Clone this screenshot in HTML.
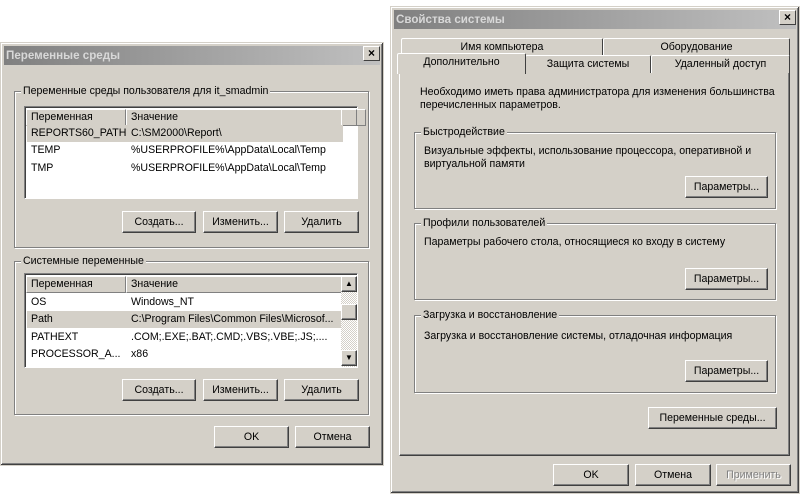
<!DOCTYPE html>
<html><head><meta charset="utf-8"><style>
*{box-sizing:border-box;margin:0;padding:0}
body{width:800px;height:498px;background:#fff;position:relative;overflow:hidden;font:10.6px "Liberation Sans","DejaVu Sans",sans-serif;color:#000}
.a{position:absolute}
.win{position:absolute;background:#d4d0c8;border:1px solid #d4d0c8;box-shadow:inset -1px -1px 0 #404040,inset 1px 1px 0 #fff,inset -2px -2px 0 #808080}
.title{position:absolute;left:3px;right:3px;top:3px;height:19px;background:linear-gradient(90deg,#808080,#c0c0c0);color:#d8d8d8;font-weight:bold;font-size:11.6px;line-height:19px;padding-left:2px}
.close{position:absolute;width:17px;height:15px;background:#d4d0c8;border:1px solid;border-color:#fff #404040 #404040 #fff;font:bold 12px/13px "Liberation Sans",sans-serif;text-align:center;color:#000}
.grp{position:absolute;border:1px solid #808080;box-shadow:1px 1px 0 #fff,inset 1px 1px 0 #fff}
.leg{position:absolute;top:-8px;left:6px;background:#d4d0c8;padding:0 2px;line-height:14px}
.btn{position:absolute;height:22px;background:#d4d0c8;border:1px solid;border-color:#fff #404040 #404040 #fff;box-shadow:inset -1px -1px 0 #808080;text-align:center;line-height:20px}
.list{position:absolute;background:#fff;border:1px solid;border-color:#808080 #fff #fff #808080;box-shadow:inset 1px 1px 0 #404040}
.hdr{position:absolute;top:2px;height:17px;background:#d4d0c8;border:1px solid;border-color:#fff #808080 #808080 #fff;line-height:15px;padding-left:4px}
.row{position:absolute;left:2px;height:17px;line-height:17px;white-space:nowrap}
.row span{position:absolute}
.tab{position:absolute;height:18px;background:#d4d0c8;border:1px solid;border-bottom:none;border-color:#fff #404040 #404040 #fff;text-align:center;line-height:16px;border-radius:2px 2px 0 0}
</style></head><body>

<div class="win" style="left:0;top:42px;width:384px;height:424px">
<div class="title">Переменные среды</div>
<div class="close" style="left:362px;top:3px">×</div>
</div>
<div class="grp" style="left:14px;top:91px;width:355px;height:157px"><div class="leg">Переменные среды пользователя для it_smadmin</div></div>
<div class="list" style="left:24px;top:106px;width:334px;height:93px">
<div class="hdr" style="left:1px;width:100px">Переменная</div>
<div class="hdr" style="left:101px;width:240px">Значение</div>
<div class="hdr" style="left:316px;width:16px"></div>
<div class="row" style="top:18px;width:316px;background:#d4d0c8"><span style="left:4px">REPORTS60_PATH</span><span style="left:104px">C:\SM2000\Report\</span></div>
<div class="row" style="top:35px"><span style="left:4px">TEMP</span><span style="left:104px">%USERPROFILE%\AppData\Local\Temp</span></div>
<div class="row" style="top:53px"><span style="left:4px">TMP</span><span style="left:104px">%USERPROFILE%\AppData\Local\Temp</span></div>
</div>
<div class="btn" style="left:122px;top:211px;width:74px">Создать...</div>
<div class="btn" style="left:203px;top:211px;width:75px">Изменить...</div>
<div class="btn" style="left:284px;top:211px;width:75px">Удалить</div>

<div class="grp" style="left:14px;top:261px;width:355px;height:154px"><div class="leg">Системные переменные</div></div>
<div class="list" style="left:24px;top:273px;width:334px;height:95px;overflow:hidden">
<div class="hdr" style="left:1px;width:100px">Переменная</div>
<div class="hdr" style="left:101px;width:240px">Значение</div>
<div class="row" style="top:20px"><span style="left:4px">OS</span><span style="left:104px">Windows_NT</span></div>
<div class="row" style="top:37px;width:315px;background:#d4d0c8"><span style="left:4px">Path</span><span style="left:104px">C:\Program Files\Common Files\Microsof...</span></div>
<div class="row" style="top:55px"><span style="left:4px">PATHEXT</span><span style="left:104px">.COM;.EXE;.BAT;.CMD;.VBS;.VBE;.JS;....</span></div>
<div class="row" style="top:72px"><span style="left:4px">PROCESSOR_A...</span><span style="left:104px">x86</span></div>
<div class="a" style="left:316px;top:2px;width:16px;height:91px;background:repeating-conic-gradient(#d4d0c8 0 25%,#fff 0 50%) 0 0/2px 2px"></div>
<div class="btn" style="left:316px;top:2px;width:16px;height:16px;line-height:13px;font-size:8px">▲</div>
<div class="btn" style="left:316px;top:30px;width:16px;height:16px"></div>
<div class="btn" style="left:316px;top:76px;width:16px;height:16px;line-height:13px;font-size:8px">▼</div>
</div>
<div class="btn" style="left:122px;top:379px;width:74px">Создать...</div>
<div class="btn" style="left:203px;top:379px;width:75px">Изменить...</div>
<div class="btn" style="left:284px;top:379px;width:75px">Удалить</div>
<div class="btn" style="left:214px;top:426px;width:75px">OK</div>
<div class="btn" style="left:295px;top:426px;width:75px">Отмена</div>

<div class="win" style="left:390px;top:6px;width:410px;height:488px">
<div class="title">Свойства системы</div>
<div class="close" style="left:388px;top:3px">×</div>
</div>
<div class="tab" style="left:401px;top:38px;width:202px">Имя компьютера</div>
<div class="tab" style="left:603px;top:38px;width:187px">Оборудование</div>
<div class="a" style="left:399px;top:72px;width:391px;height:384px;border:1px solid;border-color:#fff #404040 #404040 #fff;box-shadow:inset -1px -1px 0 #808080"></div>
<div class="tab" style="left:525px;top:55px;width:126px;height:18px">Защита системы</div>
<div class="tab" style="left:651px;top:55px;width:139px;height:18px">Удаленный доступ</div>
<div class="tab" style="left:397px;top:53px;width:129px;height:21px;border-bottom:none;z-index:2">Дополнительно</div>
<div class="a" style="left:420px;top:86px;line-height:13px">Необходимо иметь права администратора для изменения большинства<br>перечисленных параметров.</div>

<div class="grp" style="left:414px;top:132px;width:362px;height:77px"><div class="leg">Быстродействие</div></div>
<div class="a" style="left:424px;top:145px;line-height:13px">Визуальные эффекты, использование процессора, оперативной и<br>виртуальной памяти</div>
<div class="btn" style="left:685px;top:176px;width:83px">Параметры...</div>

<div class="grp" style="left:414px;top:223px;width:362px;height:77px"><div class="leg">Профили пользователей</div></div>
<div class="a" style="left:424px;top:236px;line-height:13px">Параметры рабочего стола, относящиеся ко входу в систему</div>
<div class="btn" style="left:685px;top:268px;width:83px">Параметры...</div>

<div class="grp" style="left:414px;top:315px;width:362px;height:78px"><div class="leg">Загрузка и восстановление</div></div>
<div class="a" style="left:424px;top:330px;line-height:13px">Загрузка и восстановление системы, отладочная информация</div>
<div class="btn" style="left:685px;top:360px;width:83px">Параметры...</div>

<div class="btn" style="left:648px;top:407px;width:129px">Переменные среды...</div>
<div class="btn" style="left:553px;top:464px;width:76px">OK</div>
<div class="btn" style="left:635px;top:464px;width:76px">Отмена</div>
<div class="btn" style="left:716px;top:464px;width:75px;color:#808080;text-shadow:1px 1px 0 #fff">Применить</div>
</body></html>
